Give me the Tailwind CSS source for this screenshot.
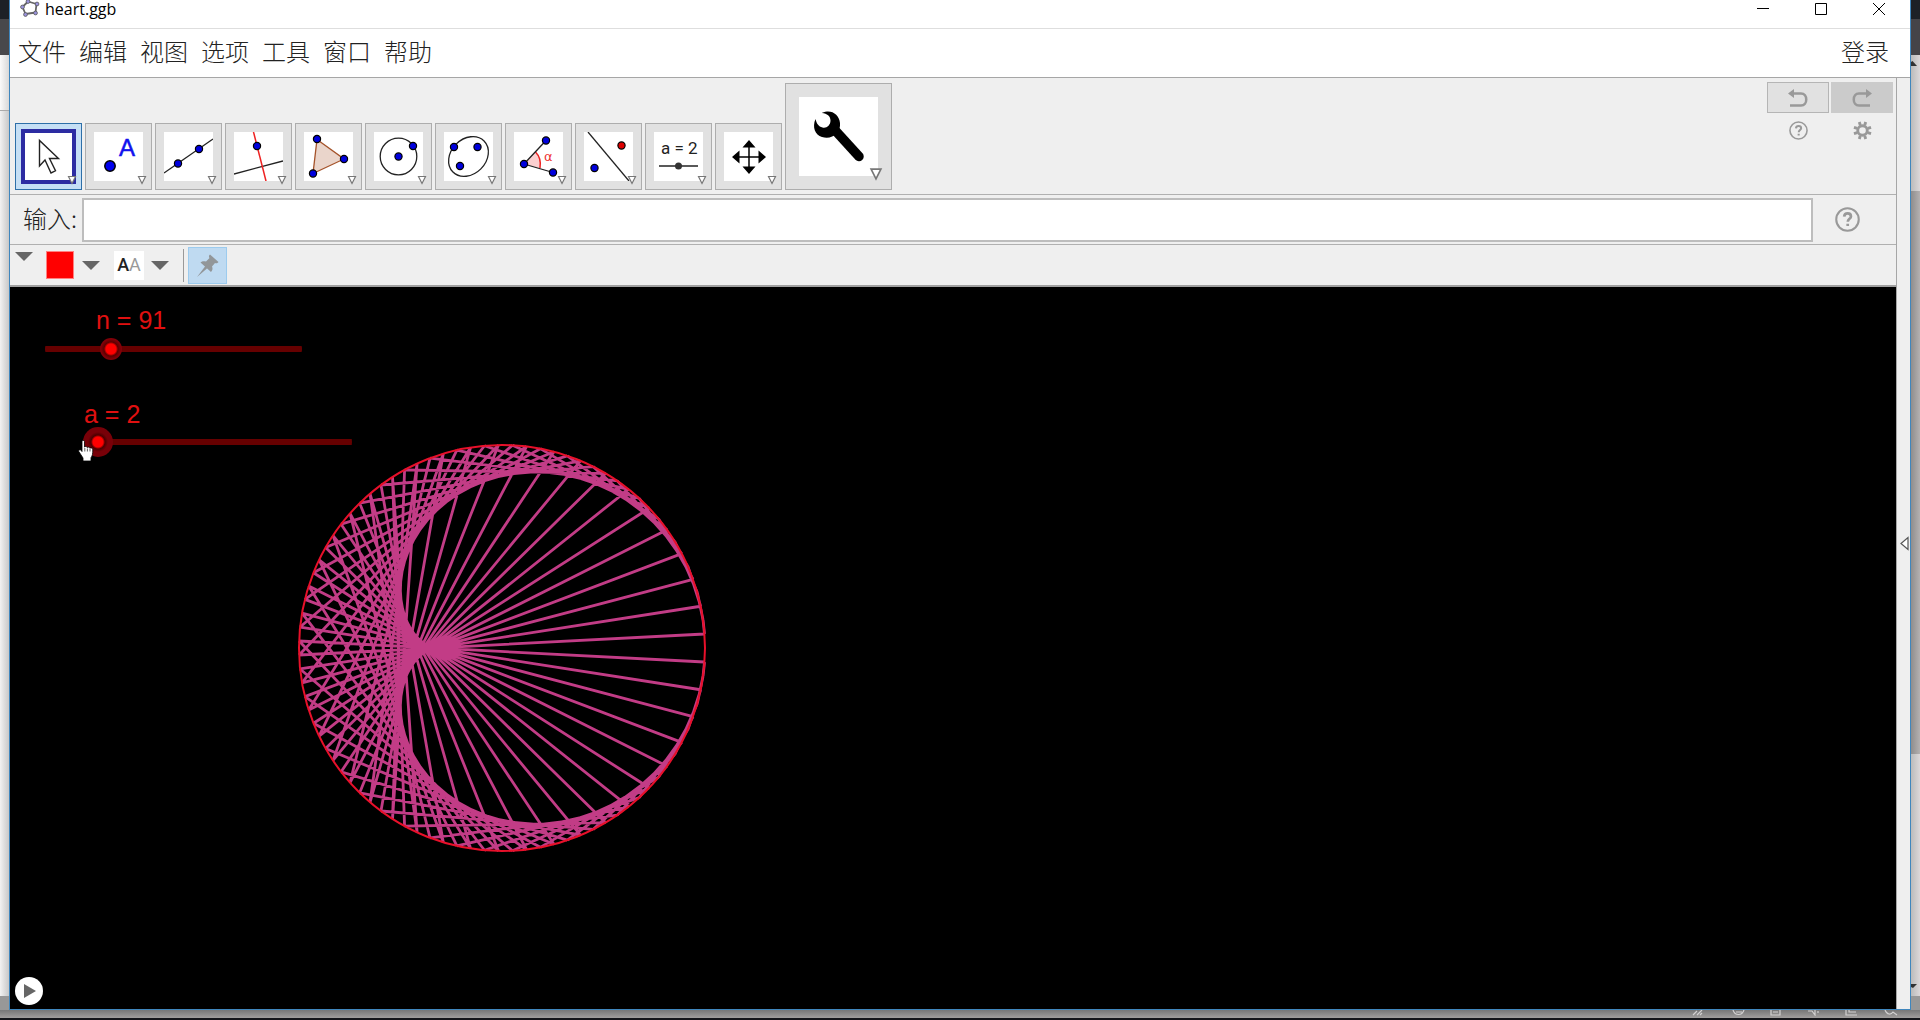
<!DOCTYPE html>
<html lang="zh-CN">
<head>
<meta charset="utf-8">
<title>heart.ggb</title>
<script src="https://cdn.jsdelivr.net/npm/@tailwindcss/browser@4"></script>
</head>
<body class="flex h-screen flex-col overflow-hidden bg-[#989696] font-['Noto_Sans_CJK_SC',sans-serif] text-[#222]">
<svg class="hidden" aria-hidden="true">
  <symbol id="drop" viewBox="0 0 10 10"><path d="M1.5 1.500h7L5 8.500z" fill="#fff" stroke="#777" stroke-width="1.200"/></symbol>
  <symbol id="arrow" viewBox="0 0 18 9"><path d="M0 0h18L9 9z" fill="#666"/></symbol>
  <symbol id="help" viewBox="0 0 24 24"><circle cx="12" cy="12" r="10.800" fill="none" stroke="#999" stroke-width="2"/><path d="M8.800 9.200c.2-2 1.500-3 3.300-3 1.900 0 3.200 1.100 3.200 2.800 0 2.400-3 2.400-3 5.200M12.200 16v2.200" fill="none" stroke="#999" stroke-width="2.600"/></symbol>
</svg>

<div class="flex min-h-0 flex-1">
  <!-- desktop strip left of the window -->
  <div class="flex w-[9px] shrink-0 flex-col">
    <div class="h-[19px] bg-[#1d2127]"></div>
    <div class="h-9 bg-[#48484b]"></div>
    <div class="h-14 border-b border-[#aaa] bg-linear-to-r from-[#fafafa] to-[#d8d8d8]"></div>
    <div class="flex-1 bg-linear-to-r from-[#f2f2f2] to-[#c8c8c8]"></div>
    <div class="h-[14px] bg-[#989898]"></div>
  </div>

  <main class="flex min-w-0 flex-1 flex-col border-x border-b border-[#3f86bd] bg-[#efefef]">
    <header class="flex h-[29px] shrink-0 items-start border-b border-[#dedede] bg-white pl-2.5">
      <svg class="h-[18px] w-5" viewBox="0 0 20 18" fill="none"><path d="M8 1.500L16.500 4 15.500 12.500 5.500 14 2.500 7z" stroke="#666" stroke-width="1.800" stroke-linejoin="round"/><g fill="#9a93dd" stroke="#555" stroke-width=".8"><circle cx="8" cy="1.500" r="1.900"/><circle cx="17" cy="4" r="1.900"/><circle cx="15.500" cy="13" r="1.900"/><circle cx="5.500" cy="14.500" r="1.900"/><circle cx="2.500" cy="7" r="1.900"/></g></svg>
      <h1 class="ml-[5px] font-['Open_Sans',sans-serif] text-base leading-[18px] text-black">heart.ggb</h1>
      <div class="ml-auto flex pr-0.5">
        <button aria-label="最小化" class="flex h-[18px] w-[58px] items-center justify-center"><svg class="size-3" viewBox="0 0 12 12"><path d="M0 5.500h12" stroke="#000"/></svg></button>
        <button aria-label="最大化" class="flex h-[18px] w-[58px] items-center justify-center"><svg class="size-3" viewBox="0 0 12 12"><path d="M.5.5h11v11H.5z" fill="none" stroke="#000"/></svg></button>
        <button aria-label="关闭" class="flex h-[18px] w-[58px] items-center justify-center"><svg class="size-3" viewBox="0 0 12 12"><path d="M0 0l12 12M12 0L0 12" stroke="#000"/></svg></button>
      </div>
    </header>

    <nav class="flex h-[49px] shrink-0 items-center gap-[13px] border-b border-[#a6a6a6] bg-white pr-[21px] pb-1 pl-2 text-2xl leading-8 font-light">
      <button>文件</button><button>编辑</button><button>视图</button><button>选项</button><button>工具</button><button>窗口</button><button>帮助</button>
      <button class="ml-auto">登录</button>
    </nav>

    <div class="flex min-h-0 flex-1">
      <div class="flex min-w-0 flex-1 flex-col">
        <!-- construction tools -->
        <div class="flex h-[117px] shrink-0 items-end border-b border-[#b0b0b0] pb-1 pl-[5px]">
          <div class="flex items-end gap-[3px]">
            <button aria-label="移动" class="relative size-[67px] border border-[#2d6fa8] bg-[#c5dff5] p-[5px]">
              <svg class="size-[55px]" viewBox="0 0 55 55"><path d="M2 2h51v51H2z" fill="#fff" stroke="#2c2ca2" stroke-width="4"/><path d="M18.500 11.500V37l5.500-6 6 13 4.500-2.200-6-12.300h9z" fill="#fff" stroke="#222" stroke-width="1.400"/></svg>
              <svg class="absolute right-1 bottom-1 size-2.5"><use href="#drop"/></svg>
            </button>
            <button aria-label="点" class="relative size-[67px] border border-[#adadad] bg-[#e1e1e1] p-2">
              <svg class="size-[49px] bg-white" viewBox="0 0 49 49"><circle cx="16" cy="34" r="5.200" fill="#00e" stroke="#000" stroke-width="1.500"/><text x="25" y="24" font-family="Liberation Sans" font-size="24" fill="#11e" stroke="#11e" stroke-width=".5">A</text></svg>
              <svg class="absolute right-1 bottom-1 size-2.5"><use href="#drop"/></svg>
            </button>
            <button aria-label="直线" class="relative size-[67px] border border-[#adadad] bg-[#e1e1e1] p-2">
              <svg class="size-[49px] bg-white" viewBox="0 0 49 49"><path d="M0 41L49 7" stroke="#222" stroke-width="1.300"/><g fill="#00d" stroke="#000" stroke-width="1.200"><circle cx="14" cy="31.500" r="3.600"/><circle cx="35" cy="17" r="3.600"/></g></svg>
              <svg class="absolute right-1 bottom-1 size-2.5"><use href="#drop"/></svg>
            </button>
            <button aria-label="垂线" class="relative size-[67px] border border-[#adadad] bg-[#e1e1e1] p-2">
              <svg class="size-[49px] bg-white" viewBox="0 0 49 49"><path d="M0 42L49 29" stroke="#222" stroke-width="1.300"/><path d="M19.500 0L32 49" stroke="#e22" stroke-width="1.500"/><circle cx="23" cy="14" r="3.600" fill="#00d" stroke="#000" stroke-width="1.200"/></svg>
              <svg class="absolute right-1 bottom-1 size-2.5"><use href="#drop"/></svg>
            </button>
            <button aria-label="多边形" class="relative size-[67px] border border-[#adadad] bg-[#e1e1e1] p-2">
              <svg class="size-[49px] bg-white" viewBox="0 0 49 49"><path d="M13 7.500L40 27 9 41.500z" fill="#ead5cb" stroke="#a5532a" stroke-width="1.300"/><g fill="#00d" stroke="#000" stroke-width="1.200"><circle cx="13" cy="7" r="3.600"/><circle cx="40" cy="27" r="3.600"/><circle cx="9" cy="41.500" r="3.600"/></g></svg>
              <svg class="absolute right-1 bottom-1 size-2.5"><use href="#drop"/></svg>
            </button>
            <button aria-label="圆" class="relative size-[67px] border border-[#adadad] bg-[#e1e1e1] p-2">
              <svg class="size-[49px] bg-white" viewBox="0 0 49 49"><circle cx="24.500" cy="24.500" r="18.300" fill="none" stroke="#222" stroke-width="1.300"/><g fill="#00d" stroke="#000" stroke-width="1.200"><circle cx="24.500" cy="24.500" r="3.600"/><circle cx="39" cy="14" r="3.600"/></g></svg>
              <svg class="absolute right-1 bottom-1 size-2.5"><use href="#drop"/></svg>
            </button>
            <button aria-label="圆锥曲线" class="relative size-[67px] border border-[#adadad] bg-[#e1e1e1] p-2">
              <svg class="size-[49px] bg-white" viewBox="0 0 49 49"><ellipse cx="24.500" cy="24.500" rx="22" ry="17.500" transform="rotate(-45 24.500 24.500)" fill="none" stroke="#222" stroke-width="1.300"/><g fill="#00d" stroke="#000" stroke-width="1.200"><circle cx="10" cy="15" r="3.600"/><circle cx="33.500" cy="15" r="3.600"/><circle cx="16" cy="34" r="3.600"/></g></svg>
              <svg class="absolute right-1 bottom-1 size-2.5"><use href="#drop"/></svg>
            </button>
            <button aria-label="角度" class="relative size-[67px] border border-[#adadad] bg-[#e1e1e1] p-2">
              <svg class="size-[49px] bg-white" viewBox="0 0 49 49"><path d="M10 32l11.500-12c4 4 5.500 10 4.500 16z" fill="#fcd0d0"/><path d="M21.500 20c4 4 5.500 10 4.500 16" fill="none" stroke="#e22" stroke-width="1.500"/><path d="M32 8.500L10 32l29 8.500" fill="none" stroke="#222" stroke-width="1.300"/><g fill="#00d" stroke="#000" stroke-width="1.200"><circle cx="32" cy="8.500" r="3.600"/><circle cx="10" cy="32" r="3.600"/><circle cx="39" cy="40.500" r="3.600"/></g><text x="30" y="29" font-family="DejaVu Sans" font-size="13" fill="#e33">α</text></svg>
              <svg class="absolute right-1 bottom-1 size-2.5"><use href="#drop"/></svg>
            </button>
            <button aria-label="轴对称" class="relative size-[67px] border border-[#adadad] bg-[#e1e1e1] p-2">
              <svg class="size-[49px] bg-white" viewBox="0 0 49 49"><path d="M4 0l41 49" stroke="#222" stroke-width="1.300"/><g stroke="#000" stroke-width="1.200"><circle cx="10.500" cy="36" r="3.600" fill="#00d"/><circle cx="37.500" cy="13.500" r="3.600" fill="#d00"/></g></svg>
              <svg class="absolute right-1 bottom-1 size-2.5"><use href="#drop"/></svg>
            </button>
            <button aria-label="滑动条" class="relative size-[67px] border border-[#adadad] bg-[#e1e1e1] p-2">
              <svg class="size-[49px] bg-white" viewBox="0 0 49 49"><text x="7" y="22" font-family="Roboto" font-size="17" fill="#222">a = 2</text><path d="M5 34h39" stroke="#222" stroke-width="1.300"/><circle cx="24.500" cy="34" r="3.500" fill="#333"/></svg>
              <svg class="absolute right-1 bottom-1 size-2.5"><use href="#drop"/></svg>
            </button>
            <button aria-label="移动视图" class="relative size-[67px] border border-[#adadad] bg-[#e1e1e1] p-2">
              <svg class="size-[49px] bg-white" viewBox="0 0 49 49"><path d="M25 12v26M12 25h26" stroke="#000" stroke-width="1.500"/><path d="M25 8l6.500 7.500h-13zM25 42l6.500-7.500h-13zM8 25l7.500-6.500v13zM42 25l-7.500-6.500v13z"/></svg>
              <svg class="absolute right-1 bottom-1 size-2.5"><use href="#drop"/></svg>
            </button>
            <button aria-label="自定义工具" class="relative size-[107px] border border-[#adadad] bg-[#e1e1e1] p-[13px]">
              <svg class="size-[79px] bg-white" viewBox="0 0 79 79"><path d="M34 31l26 28.500" stroke="#000" stroke-width="9.500" stroke-linecap="round"/><path d="M16.500 22C13 30 16 38 23 40c10 3 19-4 18-14-.6-7-6-12-13-11.500-2.500.2-4.500 1-5 1.500 5 .5 8.500 3 8.500 7.500 0 5-4 8-8 7-4-1-6-4-7-8.500z"/></svg>
              <svg class="absolute right-2 bottom-2 size-3.5"><use href="#drop"/></svg>
            </button>
          </div>
          <div class="mr-[3px] mb-auto ml-auto grid grid-cols-2 gap-x-0.5 gap-y-2 pt-1">
            <button aria-label="撤销" class="flex h-[31px] w-[62px] items-center justify-center border border-[#b5b5b5] bg-[#e1e1e1]"><svg class="h-[18px] w-5" viewBox="0 0 20 18"><path d="M5 4.500h8c7 0 7 12 0 12H2" fill="none" stroke="#999" stroke-width="2.500"/><path d="M0 4.500L6 0v9z" fill="#999"/></svg></button>
            <button aria-label="重做" class="flex h-[31px] w-[62px] items-center justify-center bg-[#cbcbcb]"><svg class="h-[18px] w-5" viewBox="0 0 20 18"><path d="M15 4.500H7c-7 0-7 12 0 12h11" fill="none" stroke="#999" stroke-width="2.500"/><path d="M20 4.500L14 0v9z" fill="#999"/></svg></button>
            <button aria-label="帮助" class="flex justify-center"><svg class="size-[19px]"><use href="#help"/></svg></button>
            <button aria-label="设置" class="flex justify-center"><svg class="size-[19px]" viewBox="-10 -10 20 20" fill="none" stroke="#999"><circle r="5" stroke-width="3"/><path d="M2.300-5.500l1.100-3.500M-2.300-5.500L-3.400-9M2.300 5.500L3.400 9M-2.300 5.500L-3.400 9M5.500 2.300L9 3.400M5.500-2.300L9-3.400M-5.500 2.300L-9 3.400M-5.500-2.300L-9-3.400" stroke-width="3"/></svg></button>
          </div>
        </div>

        <!-- input bar -->
        <div class="flex h-[50px] shrink-0 items-center border-b border-[#b0b0b0] pr-9 pl-[13px]">
          <label for="cmd" class="w-[59px] pb-1 text-2xl leading-8 font-light whitespace-nowrap">输入:</label>
          <input id="cmd" type="text" class="h-11 min-w-0 flex-1 border-2 border-[#bdbdbd] bg-white px-2 text-xl outline-none">
          <button aria-label="输入帮助" class="ml-[22px]"><svg class="size-[25px]"><use href="#help"/></svg></button>
        </div>

        <!-- style bar -->
        <div class="flex h-[42px] shrink-0 items-center border-b-2 border-[#a0a0a0] pl-[5px]">
          <button aria-label="样式栏" class="mb-[18px]"><svg class="h-[9px] w-[18px]"><use href="#arrow"/></svg></button>
          <button aria-label="颜色" class="ml-[13px] flex items-center gap-2"><span class="size-7 border border-[#ff8080] bg-[#f00]"></span><svg class="h-[9px] w-[18px]"><use href="#arrow"/></svg></button>
          <button aria-label="文字样式" class="ml-3.5 flex items-center gap-[7px]"><span class="flex h-[29px] w-[30px] items-center justify-center bg-white font-['Roboto',sans-serif] text-lg leading-6"><b class="font-medium">A</b><span class="text-[#999]">A</span></span><svg class="h-[9px] w-[18px]"><use href="#arrow"/></svg></button>
          <span class="ml-3.5 h-[33px] border-l border-[#999]"></span>
          <button aria-label="固定" class="ml-1 flex h-[37px] w-[39px] items-center justify-center border border-[#9ccbee] bg-[#bfdaf1]"><svg class="size-[23px]" viewBox="0 0 23 23"><path d="M14 .5L22.500 8c-1 1.500-2.500 1.500-3.500 1l-3 3.500c1 2 .5 4-1 5.500L4.500 8.500C6 7 8 7 10 7.500L13.500 4c-.8-1-.8-2.500.5-3.500zM9 12.500l2 2L1 23z" fill="#929699"/></svg></button>
        </div>

        <!-- graphics view -->
        <section aria-label="绘图区" class="relative min-h-0 flex-1 overflow-hidden bg-black font-['Liberation_Sans',sans-serif] text-[25px] leading-7 text-[#e01010]">
          <svg id="plot" class="absolute top-[156px] left-[287px] size-[410px]" viewBox="-205 -205 410 410" fill="none"></svg>

          <label for="n" class="absolute top-[19px] left-[86px]">n = 91</label>
          <input id="n" type="range" min="0" max="390" value="91" class="absolute top-[51px] left-[35px] h-[22px] w-[257px] appearance-none bg-transparent [&::-webkit-slider-runnable-track]:h-[22px] [&::-webkit-slider-runnable-track]:rounded-full [&::-webkit-slider-runnable-track]:bg-[linear-gradient(transparent_8px,#660000_8px,#660000_14px,transparent_14px)] [&::-webkit-slider-thumb]:size-[22px] [&::-webkit-slider-thumb]:appearance-none [&::-webkit-slider-thumb]:rounded-full [&::-webkit-slider-thumb]:bg-[radial-gradient(circle,#ff0000_5px,#5c0000_7px,#820008_10px)]">

          <label for="a" class="absolute top-[113px] left-[74px]">a = 2</label>
          <input id="a" type="range" min="2" max="100" value="2" class="absolute top-[140px] left-[73px] h-[30px] w-[269px] appearance-none bg-transparent [&::-webkit-slider-runnable-track]:h-[30px] [&::-webkit-slider-runnable-track]:rounded-full [&::-webkit-slider-runnable-track]:bg-[linear-gradient(transparent_12px,#660000_12px,#660000_18px,transparent_18px)] [&::-webkit-slider-thumb]:size-[30px] [&::-webkit-slider-thumb]:appearance-none [&::-webkit-slider-thumb]:rounded-full [&::-webkit-slider-thumb]:bg-[radial-gradient(circle,#ff0000_5px,#4a0000_7px,#780008_10px)]">

          <svg class="absolute top-[153px] left-[68px] h-[22px] w-4" viewBox="0 0 16 22" aria-hidden="true"><path d="M4 1.500c0-1.500 2.500-1.500 2.500 0V7c1-1 2.500-.5 2.700.5 1-.8 2.400-.3 2.600.7 1.200-.7 3 0 3 1.500 0 4-.3 6-1.800 8V21H5v-3L.8 11.500c-.5-1.500 1.500-2.500 2.500-1L4 11.500z" fill="#fff" stroke="#000" stroke-width=".8"/><path d="M6.800 8v3.500M9.400 8.500v3M12 9v2.500" stroke="#333" stroke-width=".8"/></svg>

          <button aria-label="播放" class="absolute bottom-1 left-[5px] flex size-7 items-center justify-center rounded-full bg-white"><svg class="ml-0.5 h-3.5 w-3" viewBox="0 0 12 14"><path d="M0 0l12 7-12 7z" fill="#666"/></svg></button>
        </section>
      </div>

      <!-- collapsed side panel -->
      <aside class="flex w-[14px] shrink-0 items-center border-l border-[#a6a6a6] bg-[#efefef]">
        <button aria-label="展开侧栏" class="ml-[3px]"><svg class="h-[15px] w-[9px]" viewBox="0 0 9 15"><path d="M8 1.500v12L1 7.500z" fill="#fff" stroke="#555" stroke-width="1.200"/></svg></button>
      </aside>
    </div>
  </main>

  <!-- desktop strip right of the window -->
  <div class="flex w-[9px] shrink-0 flex-col">
    <div class="h-[19px] bg-[#1d2127]"></div>
    <div class="h-9 bg-[#454448]"></div>
    <div class="h-[136px] bg-linear-to-r from-[#bbb] to-[#dcd8d9] pt-1.5"><svg class="h-1.5 w-[6px]" viewBox="0 0 6 6"><path d="M0 1l1.500-1L6 5H0z" fill="#333"/></svg></div>
    <div class="h-[563px] bg-linear-to-r from-[#8f8d8d] to-[#b4b1b1]"></div>
    <div class="flex flex-1 items-end bg-linear-to-r from-[#bbb] to-[#dcd8d9] pb-2"><svg class="h-1 w-[6px]" viewBox="0 0 6 4"><path d="M0 0h6L2 4 0 3z" fill="#333"/></svg></div>
    <div class="h-[14px] bg-[#989898]"></div>
  </div>
</div>

<!-- task strip showing below the window -->
<footer class="flex h-[10px] shrink-0 items-start justify-end border-b-2 border-[#15161a] bg-linear-to-b from-[#777] to-[#a19e9d] pr-5">
  <svg class="h-[6px] w-[208px]" viewBox="0 0 208 6" fill="none" stroke="#d2d0d0" stroke-width="1.200"><path d="M1 5l4-4M5 5l5-5M8 5l2-2M41 0c2 6 9 6 11 0M44 2h6M79 0v5h9V0M81 2h5M116 1h4l3 4V0M126 1v2M154 0v5h11M157 0v2h7M193 0c2 5 6 5 8 2l4 3"/></svg>
</footer>

<script>
  // Chords joining point k to point a·k on a circle of n equally spaced points
  const n = 91, a = 2, r = 203;
  const at = k => [r * Math.cos(2 * Math.PI * k / n), -r * Math.sin(2 * Math.PI * k / n)].map(v => v.toFixed(2)).join(' ');
  let chords = '';
  for (let k = 1; k < n; k++) chords += `M${at(k)}L${at(a * k)}`;
  document.getElementById('plot').innerHTML =
    `<path d="${chords}" stroke="#c23c86" stroke-width="2.800"/><circle r="${r}" stroke="#e8102a" stroke-width="2"/>`;
</script>
</body>
</html>
